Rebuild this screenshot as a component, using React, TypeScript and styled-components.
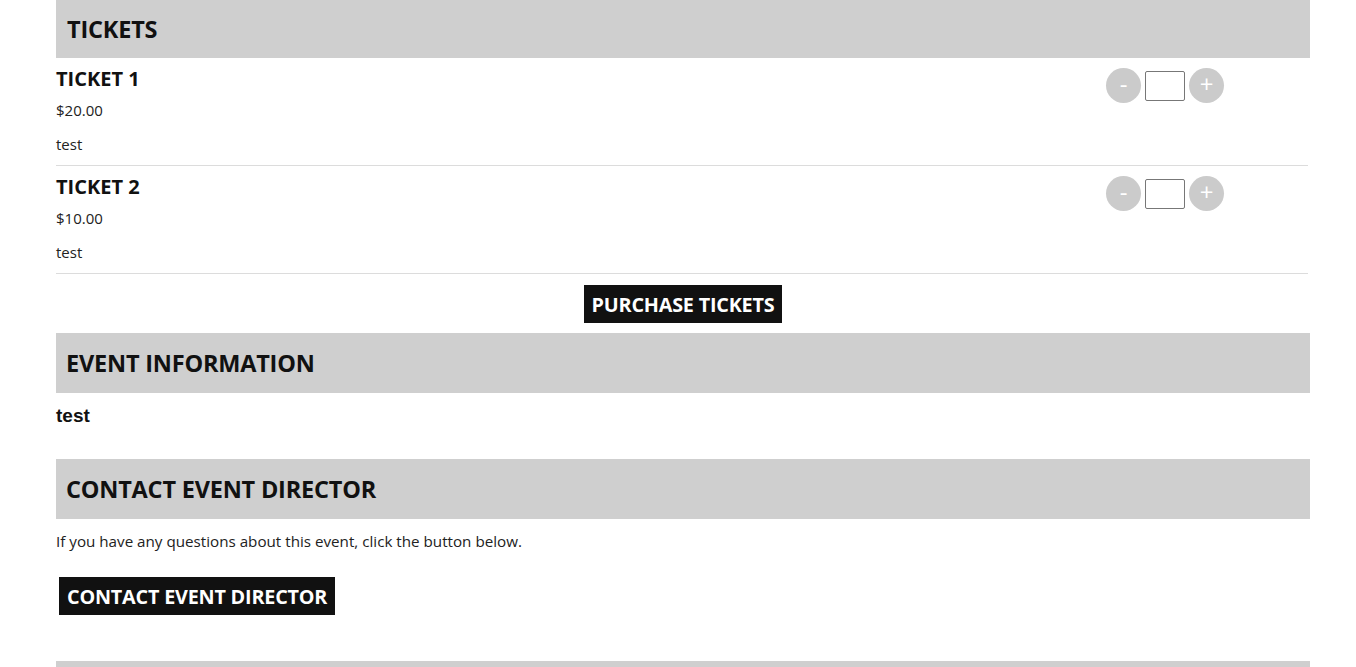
import React from 'react';
import styled, { createGlobalStyle } from 'styled-components';

const GlobalStyle = createGlobalStyle`
  body {
    margin: 0;
    background: #fff;
    font-family: "Open Sans", "Noto Sans", sans-serif;
    color: #222;
  }
`;

const Page = styled.div`
  width: 1254px;
  margin-left: 56px;
`;

const SectionHeader = styled.div<{ $tall?: boolean }>`
  display: flex;
  align-items: center;
  height: ${(p) => (p.$tall ? '60px' : '58px')};
  padding-left: ${(p) => (p.$tall ? '10px' : '11px')};
  background: #cfcfcf;
`;

const HeaderTitle = styled.h2`
  margin: 0;
  font-size: 23.5px;
  font-weight: 700;
  color: #111;
  letter-spacing: -0.2px;
`;

const TicketRow = styled.div`
  display: flex;
  justify-content: space-between;
  align-items: flex-start;
  width: 1252px;
  height: 107px;
  border-bottom: 1px solid #dcdcdc;
  box-sizing: content-box;
`;

const TicketInfo = styled.div`
  display: flex;
  flex-direction: column;
  padding-top: 8px;
`;

const TicketName = styled.div`
  font-size: 20px;
  font-weight: 700;
  color: #111;
  line-height: 26px;
`;

const TicketText = styled.div`
  font-size: 15px;
  line-height: 20px;
  color: #222;
  margin-top: 8px;
  & + & {
    margin-top: 14px;
  }
`;

const Controls = styled.div`
  display: flex;
  align-items: center;
  gap: 4px;
  margin-top: 10px;
  margin-right: 84px;
`;

const RoundButton = styled.button`
  width: 35px;
  height: 35px;
  border-radius: 50%;
  border: none;
  background: #cbcbcb;
  color: #fff;
  font-family: "Open Sans", sans-serif;
  font-size: 24px;
  line-height: 1;
  padding: 0 0 3px;
  display: flex;
  align-items: center;
  justify-content: center;
  cursor: pointer;
`;

const QtyInput = styled.input`
  width: 40px;
  height: 30px;
  box-sizing: border-box;
  border: 1px solid #777;
  border-radius: 2px;
  padding: 0 4px;
  font-size: 14px;
`;

const Center = styled.div`
  display: flex;
  justify-content: center;
  padding: 11px 0 10px;
`;

const DarkButton = styled.button`
  height: 38px;
  padding: 0 8px;
  background: #111;
  color: #fff;
  border: none;
  font-family: "Open Sans", "Noto Sans", sans-serif;
  font-size: 19.8px;
  font-weight: 700;
  letter-spacing: -0.2px;
  cursor: pointer;
`;

const InfoBody = styled.div`
  padding: 12px 0 33px;
  font-family: "Liberation Sans", Arial, sans-serif;
  font-weight: 700;
  font-size: 19px;
  line-height: 21px;
  color: #111;
`;

const ContactBody = styled.div`
  padding: 12px 0 46px 0;
`;

const ContactText = styled.p`
  margin: 0 0 26px;
  font-size: 15.2px;
  color: #222;
`;

const ContactButtonWrap = styled.div`
  padding-left: 3px;
`;

const tickets = [
  { name: 'TICKET 1', price: '$20.00', desc: 'test' },
  { name: 'TICKET 2', price: '$10.00', desc: 'test' },
];

export default function App() {
  return (
    <>
      <GlobalStyle />
      <Page>
        <SectionHeader>
          <HeaderTitle>TICKETS</HeaderTitle>
        </SectionHeader>
        {tickets.map((t) => (
          <TicketRow key={t.name}>
            <TicketInfo>
              <TicketName>{t.name}</TicketName>
              <TicketText>{t.price}</TicketText>
              <TicketText>{t.desc}</TicketText>
            </TicketInfo>
            <Controls>
              <RoundButton>-</RoundButton>
              <QtyInput type="text" />
              <RoundButton>+</RoundButton>
            </Controls>
          </TicketRow>
        ))}
        <Center>
          <DarkButton>PURCHASE TICKETS</DarkButton>
        </Center>
        <SectionHeader $tall>
          <HeaderTitle>EVENT INFORMATION</HeaderTitle>
        </SectionHeader>
        <InfoBody>test</InfoBody>
        <SectionHeader $tall>
          <HeaderTitle>CONTACT EVENT DIRECTOR</HeaderTitle>
        </SectionHeader>
        <ContactBody>
          <ContactText>If you have any questions about this event, click the button below.</ContactText>
          <ContactButtonWrap>
            <DarkButton>CONTACT EVENT DIRECTOR</DarkButton>
          </ContactButtonWrap>
        </ContactBody>
        <SectionHeader $tall />
      </Page>
    </>
  );
}
